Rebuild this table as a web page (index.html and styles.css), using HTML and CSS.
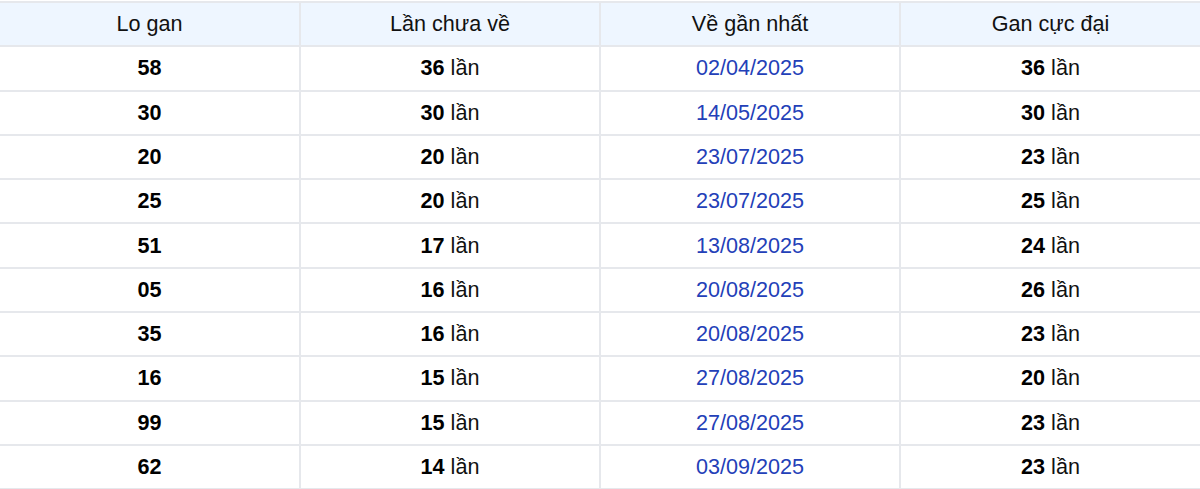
FILE: index.html
```html
<!DOCTYPE html>
<html lang="vi">
<head>
<meta charset="utf-8">
<link rel="stylesheet" href="styles.css">
</head>
<body>
<table class="gan-table">
  <thead>
    <tr><th>Lo gan</th><th>Lần chưa về</th><th>Về gần nhất</th><th>Gan cực đại</th></tr>
  </thead>
  <tbody>
    <tr><td><b>58</b></td><td><b>36</b> lần</td><td class="date">02/04/2025</td><td><b>36</b> lần</td></tr>
    <tr><td><b>30</b></td><td><b>30</b> lần</td><td class="date">14/05/2025</td><td><b>30</b> lần</td></tr>
    <tr><td><b>20</b></td><td><b>20</b> lần</td><td class="date">23/07/2025</td><td><b>23</b> lần</td></tr>
    <tr><td><b>25</b></td><td><b>20</b> lần</td><td class="date">23/07/2025</td><td><b>25</b> lần</td></tr>
    <tr><td><b>51</b></td><td><b>17</b> lần</td><td class="date">13/08/2025</td><td><b>24</b> lần</td></tr>
    <tr><td><b>05</b></td><td><b>16</b> lần</td><td class="date">20/08/2025</td><td><b>26</b> lần</td></tr>
    <tr><td><b>35</b></td><td><b>16</b> lần</td><td class="date">20/08/2025</td><td><b>23</b> lần</td></tr>
    <tr><td><b>16</b></td><td><b>15</b> lần</td><td class="date">27/08/2025</td><td><b>20</b> lần</td></tr>
    <tr><td><b>99</b></td><td><b>15</b> lần</td><td class="date">27/08/2025</td><td><b>23</b> lần</td></tr>
    <tr><td><b>62</b></td><td><b>14</b> lần</td><td class="date">03/09/2025</td><td><b>23</b> lần</td></tr>
  </tbody>
</table>
</body>
</html>
```
FILE: styles.css
```css
html, body {
  margin: 0;
  padding: 0;
  background: #ffffff;
}
body {
  font-family: "Liberation Sans", Arial, sans-serif;
  color: #111111;
  padding-top: 1px;
}
.gan-table {
  width: 1200px;
  border-collapse: collapse;
  table-layout: fixed;
  font-size: 21.6px;
}
.gan-table th,
.gan-table td {
  border: 2px solid #e6e8ec;
  padding: 9.15px 8px;
  text-align: center;
  line-height: 24px;
}
.gan-table th {
  background: #eef6ff;
  font-weight: normal;
  color: #111111;
}
.gan-table tr > :first-child { border-left: none; }
.gan-table tr > :last-child { border-right: none; }
.gan-table b { font-weight: bold; color: #000000; }
.gan-table .date { color: #2340b8; }
```
